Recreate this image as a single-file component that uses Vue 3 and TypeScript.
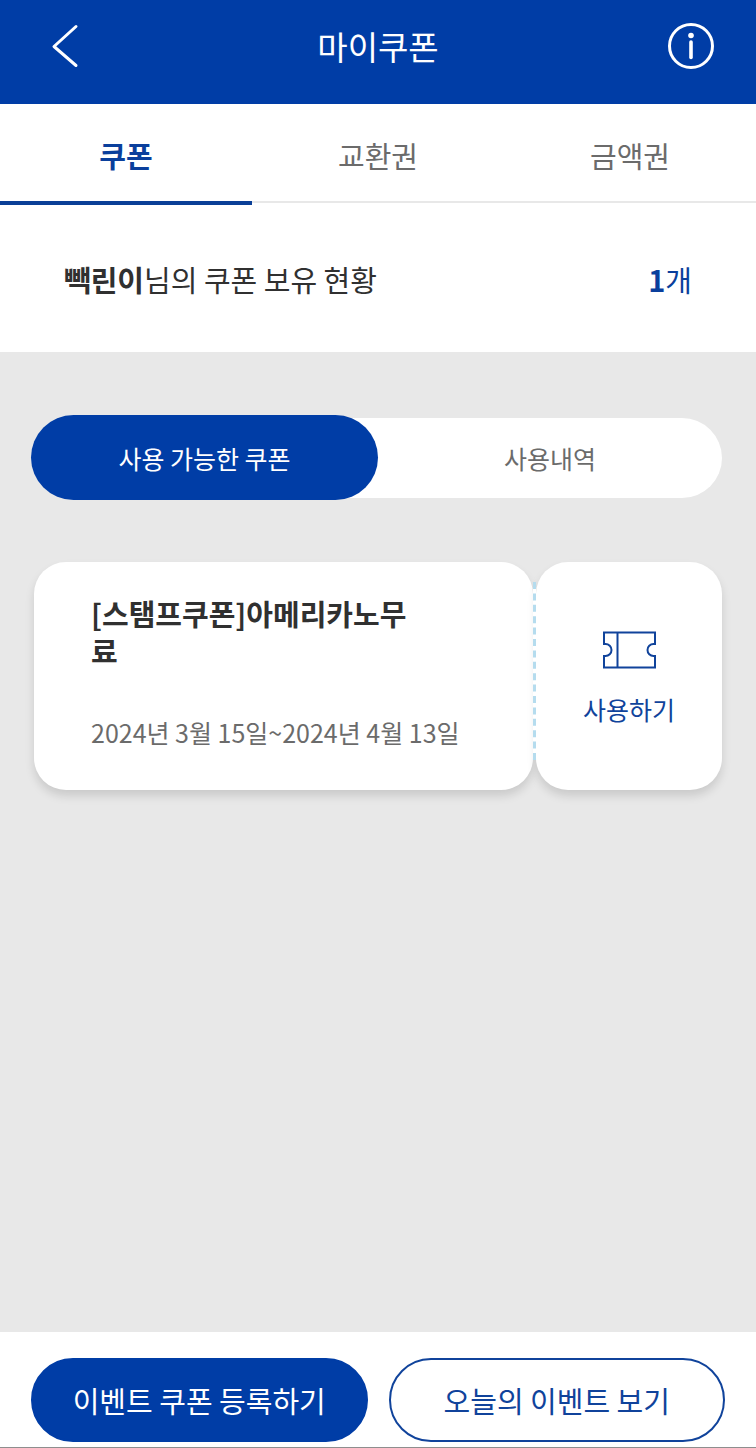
<script setup lang="ts">
import { ref } from 'vue'

interface Coupon {
  id: number
  name: string
  period: string
}

const tabs: string[] = ['쿠폰', '교환권', '금액권']
const filters: string[] = ['사용 가능한 쿠폰', '사용내역']
const activeTab = ref(0)
const activeFilter = ref(0)
const userName = '빽린이'
const coupons: Coupon[] = [
  { id: 1, name: '[스탬프쿠폰]아메리카노무료', period: '2024년 3월 15일~2024년 4월 13일' },
]
</script>

<template>
  <div class="page">
    <header class="top">
      <button class="icon-btn" type="button" aria-label="뒤로">
        <svg width="48" height="48" viewBox="0 0 48 48" fill="none" stroke="#fff" stroke-width="3" stroke-linecap="round" stroke-linejoin="round">
          <path d="M35 4.500 13 24.500 35 43.500" />
        </svg>
      </button>
      <h1>마이쿠폰</h1>
      <button class="icon-btn" type="button" aria-label="안내">
        <svg width="48" height="48" viewBox="0 0 48 48" fill="none">
          <circle cx="24" cy="24" r="21.500" stroke="#fff" stroke-width="3" />
          <circle cx="24" cy="13.500" r="2.800" fill="#fff" />
          <path d="M24 20v15.500" stroke="#fff" stroke-width="3.600" stroke-linecap="round" />
        </svg>
      </button>
    </header>

    <nav class="tabs">
      <button
        v-for="(tab, i) in tabs"
        :key="tab"
        type="button"
        :class="['tab', { active: i === activeTab }]"
        @click="activeTab = i"
      >{{ tab }}</button>
    </nav>

    <section class="summary">
      <p><strong>{{ userName }}</strong>님의 쿠폰 보유 현황</p>
      <p class="count"><strong>{{ coupons.length }}</strong>개</p>
    </section>

    <main class="content">
      <div class="filters">
        <button
          v-for="(filter, i) in filters"
          :key="filter"
          type="button"
          :class="['filter', { active: i === activeFilter }]"
          @click="activeFilter = i"
        >{{ filter }}</button>
      </div>

      <article v-for="coupon in coupons" :key="coupon.id" class="coupon">
        <div class="info">
          <h2>{{ coupon.name }}</h2>
          <p>{{ coupon.period }}</p>
        </div>
        <svg class="perforation" width="3" height="178" aria-hidden="true">
          <path d="M1.500 0V178" stroke="#b5dcee" stroke-width="3" stroke-dasharray="7 4.400" />
        </svg>
        <button class="use" type="button">
          <svg width="54" height="38" viewBox="0 0 54 38" fill="none" stroke="#10439b" stroke-width="2">
            <path d="M2 1.500H53V13H51.500A6 6 0 0 0 51.500 25H53V36.500H2V25H3.500A6 6 0 0 0 3.500 13H2ZM15.500 1.500V36.500" />
          </svg>
          <span>사용하기</span>
        </button>
      </article>
    </main>

    <footer class="actions">
      <button class="action primary" type="button">이벤트 쿠폰 등록하기</button>
      <button class="action" type="button">오늘의 이벤트 보기</button>
    </footer>
  </div>
</template>

<style>
body {
  margin: 0;
}
</style>

<style scoped>
.page {
  display: flex;
  flex-direction: column;
  box-sizing: border-box;
  min-height: 100vh;
  border-bottom: 1px solid #8e8e8e;
  background: #fff;
  color: #303030;
  font-family: "Noto Sans CJK KR", "Noto Sans", sans-serif;
  font-size: 29px;
  line-height: 44px;
}

h1,
h2,
p {
  margin: 0;
}

button {
  padding: 0;
  border: 0;
  background: none;
  color: inherit;
  font: inherit;
  cursor: pointer;
}

.top {
  display: flex;
  align-items: center;
  justify-content: space-between;
  box-sizing: border-box;
  height: 104px;
  padding: 0 41px 12px;
  background: #003da6;
  color: #fff;
}

.top h1 {
  font-size: 33px;
  font-weight: 400;
}

.icon-btn,
.icon-btn svg {
  display: block;
}

.tabs {
  display: grid;
  grid-template-columns: repeat(3, 1fr);
  height: 101px;
}

.tab {
  box-sizing: border-box;
  margin-bottom: 2px;
  padding-top: 4px;
  border-bottom: 2px solid #e8e8e8;
  color: #6b6b6b;
}

.tab.active {
  margin-bottom: 0;
  border-bottom: 4px solid #0a3f97;
  color: #0a3f9c;
  font-weight: 700;
}

.summary {
  display: flex;
  align-items: center;
  justify-content: space-between;
  height: 147px;
  padding: 0 64px;
}

.count {
  color: #0a3f9c;
}

.content {
  flex: 1;
  padding: 66px 34px;
  background: #e8e8e8;
}

.filters {
  display: grid;
  grid-template-columns: 1fr 1fr;
  height: 80px;
  border-radius: 40px;
  background: #fff;
  font-size: 25px;
}

.filter {
  color: #6b6b6b;
}

.filter.active {
  margin: -3px 0 -2px -3px;
  border-radius: 43px;
  background: #003da6;
  color: #fff;
}

.coupon {
  display: flex;
  align-items: flex-start;
  margin-top: 64px;
}

.info,
.use {
  box-sizing: border-box;
  height: 228px;
  border-radius: 32px;
  background: #fff;
  box-shadow: 0 6px 10px rgba(0, 0, 0, 0.13);
}

.info {
  flex: 1;
  padding: 33px 57px;
}

.info h2 {
  max-width: 340px;
  font-size: 29px;
  font-weight: 700;
  line-height: 37px;
  word-break: break-all;
}

.info p {
  margin-top: 41px;
  color: #6b6b6b;
  font-size: 25px;
}

.perforation {
  z-index: 1;
  flex: none;
  margin-top: 20px;
  background: #fff;
}

.use {
  display: flex;
  flex: 0 0 27%;
  flex-direction: column;
  align-items: center;
  padding-top: 69px;
  color: #10439b;
  font-size: 25px;
}

.use span {
  margin-top: 18px;
}

.actions {
  display: grid;
  grid-template-columns: 1fr 1fr;
  gap: 21px;
  padding: 26px 31px 5px;
}

.action {
  box-sizing: border-box;
  height: 84px;
  border: 2px solid #10439b;
  border-radius: 42px;
  color: #10439b;
}

.action.primary {
  border-color: #003da6;
  background: #003da6;
  color: #fff;
}
</style>
